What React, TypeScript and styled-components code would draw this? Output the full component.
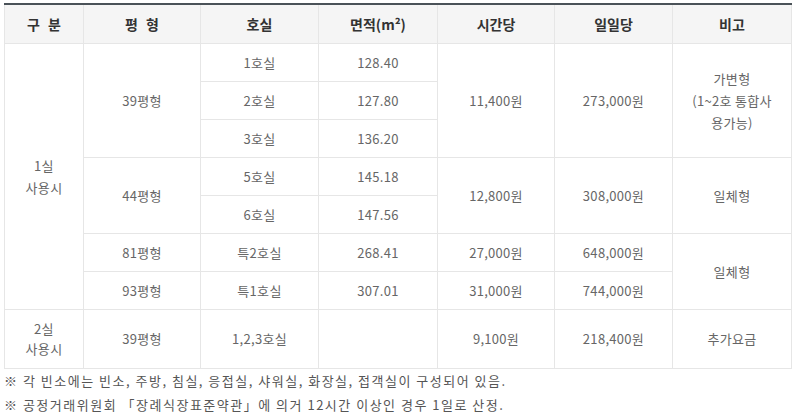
import React from "react";
import styled, { createGlobalStyle } from "styled-components";

const Global = createGlobalStyle`
  html, body { margin: 0; padding: 0; background: #fff; }
  body { font-family: "Noto Sans CJK KR", "Noto Sans", sans-serif; }
`;

const Page = styled.div`
  padding: 3px 5px 0 4px;
  width: 787px;
`;

const Table = styled.table`
  width: 787px;
  border-collapse: collapse;
  table-layout: fixed;
  border-top: 2px solid #4a5258;
  font-size: 13px;
`;

const Th = styled.th`
  height: 38px;
  padding: 0;
  background: #f5f5f5;
  color: #333;
  font-weight: 700;
  font-size: 14px;
  word-spacing: 5px;
  text-align: center;
  border: 1px solid #e6e6e6;
  border-top: none;
`;

const Td = styled.td<{ $tall?: boolean }>`
  height: ${(p) => (p.$tall ? "58px" : "37px")};
  padding: 0 4px;
  color: #666;
  text-align: center;
  vertical-align: middle;
  letter-spacing: 0.3px;
  line-height: ${(p) => (p.$tall ? "20px" : "22px")};
  border: 1px solid #e6e6e6;
`;

const Notes = styled.ul`
  list-style: none;
  margin: 0;
  padding: 0;
  font-size: 13px;
  letter-spacing: 1.5px;
  color: #555;
  line-height: 24px;
`;

const widths = [79, 117, 118, 119, 117, 118, 119];

export default function App() {
  return (
    <>
      <Global />
      <Page>
        <Table>
          <colgroup>
            {widths.map((w, i) => (
              <col key={i} style={{ width: w }} />
            ))}
          </colgroup>
          <thead>
            <tr>
              <Th>구 분</Th>
              <Th>평 형</Th>
              <Th>호실</Th>
              <Th>면적(m²)</Th>
              <Th>시간당</Th>
              <Th>일일당</Th>
              <Th>비고</Th>
            </tr>
          </thead>
          <tbody>
            <tr>
              <Td rowSpan={7}>
                1실
                <br />
                사용시
              </Td>
              <Td rowSpan={3}>39평형</Td>
              <Td>1호실</Td>
              <Td>128.40</Td>
              <Td rowSpan={3}>11,400원</Td>
              <Td rowSpan={3}>273,000원</Td>
              <Td rowSpan={3}>
                가변형
                <br />
                (1~2호 통합사
                <br />
                용가능)
              </Td>
            </tr>
            <tr>
              <Td>2호실</Td>
              <Td>127.80</Td>
            </tr>
            <tr>
              <Td>3호실</Td>
              <Td>136.20</Td>
            </tr>
            <tr>
              <Td rowSpan={2}>44평형</Td>
              <Td>5호실</Td>
              <Td>145.18</Td>
              <Td rowSpan={2}>12,800원</Td>
              <Td rowSpan={2}>308,000원</Td>
              <Td rowSpan={2}>일체형</Td>
            </tr>
            <tr>
              <Td>6호실</Td>
              <Td>147.56</Td>
            </tr>
            <tr>
              <Td>81평형</Td>
              <Td>특2호실</Td>
              <Td>268.41</Td>
              <Td>27,000원</Td>
              <Td>648,000원</Td>
              <Td rowSpan={2}>일체형</Td>
            </tr>
            <tr>
              <Td>93평형</Td>
              <Td>특1호실</Td>
              <Td>307.01</Td>
              <Td>31,000원</Td>
              <Td>744,000원</Td>
            </tr>
            <tr>
              <Td $tall>
                2실
                <br />
                사용시
              </Td>
              <Td $tall>39평형</Td>
              <Td $tall>1,2,3호실</Td>
              <Td $tall></Td>
              <Td $tall>9,100원</Td>
              <Td $tall>218,400원</Td>
              <Td $tall>추가요금</Td>
            </tr>
          </tbody>
        </Table>
        <Notes>
          <li>※ 각 빈소에는 빈소, 주방, 침실, 응접실, 샤워실, 화장실, 접객실이 구성되어 있음.</li>
          <li>※ 공정거래위원회 「장례식장표준약관」에 의거 12시간 이상인 경우 1일로 산정.</li>
        </Notes>
      </Page>
    </>
  );
}
